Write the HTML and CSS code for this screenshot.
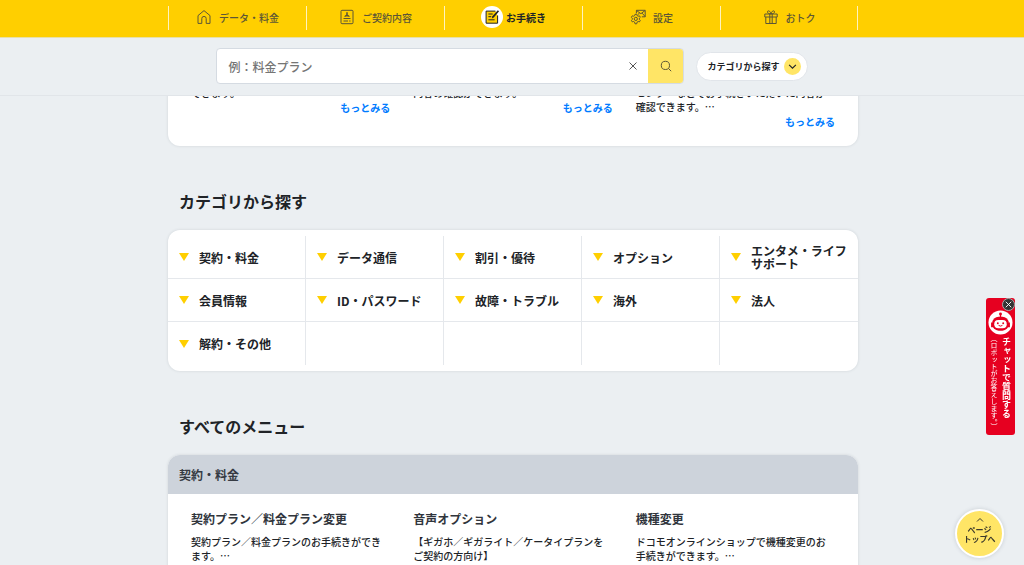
FILE: index.html
```html
<!DOCTYPE html>
<html lang="ja">
<head>
<meta charset="utf-8">
<meta name="viewport" content="width=device-width, initial-scale=1">
<title>お手続き</title>
<link rel="stylesheet" href="styles.css">
</head>
<body>
<header class="header">
  <nav class="nav" aria-label="メイン">
    <ul class="wrap nav-list">
      <li class="nav-item"><a class="nav-link" href="#data">
        <svg class="icon" viewBox="0 0 16 16"><path d="M2 6.6 8 1.6l6 5v7.8h-3.8V9.6a2.2 2.2 0 0 0-4.4 0v4.8H2z"/></svg>データ・料金</a></li>
      <li class="nav-item"><a class="nav-link" href="#contract">
        <svg class="icon" viewBox="0 0 16 16"><rect x="2" y="1.3" width="12" height="13.4" rx="1"/><path d="M6 8V6.8h4V8M4.5 9.5h7M4.5 12H9M10.2 12h1.3"/><path class="solid" d="M7.2 3.3h1.6v2.4L10 7.2H6l1.2-1.5z"/></svg>ご契約内容</a></li>
      <li class="nav-item"><a class="nav-link current" href="#procedure" aria-current="page">
        <span class="badge"><svg class="icon" viewBox="0 0 16 16"><path fill="#ffcf00" d="M13.6 6.5v7.7H2.1V2.1h9.3"/><path d="M4.4 5h4.3M4.4 7.7h2.8M4.4 10.8h6.2"/><path class="solid" d="m13.8 1.2 1.3 1.1-5.3 6.2-2 .9.6-2.1z"/></svg></span>お手続き</a></li>
      <li class="nav-item"><a class="nav-link" href="#settings">
        <svg class="icon" viewBox="0 0 16 16"><path d="M6.4 4.4V1.3h8.8v6.5h-3.4M6.5 1.5l4.4 3.2 4.2-3.2M12.2 4.2l2.9 3.3M9.5 4.3 7.7 5.5"/><path d="m5 5.3 1.7.1.4 1.2 1.1.6 1.2-.4.9 1.5-.9.9v1.3l.9.9-.9 1.5-1.2-.4-1.1.6-.4 1.7H5l-.4-1.7-1.1-.6-1.2.4-.9-1.5.9-.9V9.2l-.9-.9.9-1.5 1.2.4 1.1-.6z"/><circle cx="5.8" cy="9.9" r="1.6"/></svg>設定</a></li>
      <li class="nav-item"><a class="nav-link" href="#benefit">
        <svg class="icon" viewBox="0 0 16 16"><path d="M1.8 5h12.4v3H1.8zM2.8 8v6.5h10.4V8M6.8 5v9.5M9.2 5v9.5M8 4.7C5.8 4.8 4 4 4.5 2.5S7.7 2.3 8 4.7c.3-2.4 3-3.7 3.5-2.2S10.2 4.8 8 4.7z"/></svg>おトク</a></li>
    </ul>
  </nav>
  <div class="tools">
    <form class="search" role="search">
      <input class="search-input" type="text" aria-label="検索キーワード" placeholder="例：料金プラン">
      <button class="clear" type="reset" aria-label="クリア"><svg viewBox="0 0 10 10"><path d="m1.5 1.5 7 7m0-7-7 7"/></svg></button>
      <button class="submit" type="button" aria-label="検索"><svg viewBox="0 0 12 12"><circle cx="5.4" cy="5.4" r="4.1"/><path d="m8.4 8.4 2.8 2.8"/></svg></button>
    </form>
    <button class="pill" type="button">カテゴリから探す<span class="pill-mark"><svg viewBox="0 0 8 8"><path d="m1 2.5 3 3 3-3"/></svg></span></button>
  </div>
</header>

<main class="wrap">
  <section class="card recommend">
    <div class="entry"><p class="text">お手続きの内容をご確認いただくことが<br>できます。</p><a class="more" href="#more1">もっとみる</a></div>
    <div class="entry"><p class="text">ご契約いただいているサービスについて<br>内容の確認ができます。</p><a class="more" href="#more2">もっとみる</a></div>
    <div class="entry"><p class="text">ドコモショップ、インフォメーション<br>センターなどでお手続きいただいた内容が<br>確認できます。…</p><a class="more" href="#more3">もっとみる</a></div>
  </section>

  <h2 class="title">カテゴリから探す</h2>
  <ul class="card categories">
    <li class="cell"><a class="cat" href="#c1">契約・料金</a></li>
    <li class="cell"><a class="cat" href="#c2">データ通信</a></li>
    <li class="cell"><a class="cat" href="#c3">割引・優待</a></li>
    <li class="cell"><a class="cat" href="#c4">オプション</a></li>
    <li class="cell"><a class="cat" href="#c5">エンタメ・ライフ<br>サポート</a></li>
    <li class="cell"><a class="cat" href="#c6">会員情報</a></li>
    <li class="cell"><a class="cat" href="#c7">ID・パスワード</a></li>
    <li class="cell"><a class="cat" href="#c8">故障・トラブル</a></li>
    <li class="cell"><a class="cat" href="#c9">海外</a></li>
    <li class="cell"><a class="cat" href="#c10">法人</a></li>
    <li class="cell"><a class="cat" href="#c11">解約・その他</a></li>
    <li class="cell"></li>
    <li class="cell"></li>
    <li class="cell"></li>
    <li class="cell"></li>
  </ul>

  <h2 class="title">すべてのメニュー</h2>
  <section class="card menu">
    <h3 class="menu-head">契約・料金</h3>
    <div class="menu-body">
      <div class="entry"><h4 class="name">契約プラン／料金プラン変更</h4><p class="text">契約プラン／料金プランのお手続きができ<br>ます。…</p></div>
      <div class="entry"><h4 class="name">音声オプション</h4><p class="text">【ギガホ／ギガライト／ケータイプランを<br>ご契約の方向け】</p></div>
      <div class="entry"><h4 class="name">機種変更</h4><p class="text">ドコモオンラインショップで機種変更のお<br>手続きができます。…</p></div>
    </div>
  </section>
</main>

<aside class="chat">
  <button class="chat-close" type="button" aria-label="閉じる"><svg viewBox="0 0 12 12"><path d="m3 3 6 6m0-6-6 6"/></svg></button>
  <a class="chat-link" href="#chat">
    <svg class="robot" viewBox="0 0 26 26"><circle cx="13" cy="13" r="12.5" fill="#fff"/><path fill="#e60020" d="M12.3 4.5h1.4V8h-1.4zM3.2 13h2v5h-2zm17.6 0h2v5h-2z"/><circle cx="13" cy="4.2" r="1.5" fill="#e60020"/><rect x="4.5" y="7" width="17" height="14.5" rx="6.5" fill="#e60020"/><rect x="6.5" y="10.5" width="13" height="8.5" rx="4.2" fill="#fff"/><circle cx="10.2" cy="13.8" r="1" fill="#e60020"/><circle cx="15.8" cy="13.8" r="1" fill="#e60020"/><path fill="none" stroke="#e60020" d="M11 16q2 1.5 4 0"/></svg>
    <span class="chat-text"><b class="chat-main">チャットで質問する</b><span class="chat-sub">（ロボットがお答えします。）</span></span>
  </a>
</aside>
<a class="to-top" href="#top"><svg viewBox="0 0 8 6"><path d="m1 4.5 3-3 3 3"/></svg><span>ページ<br>トップへ</span></a>
</body>
</html>
```
FILE: styles.css
```css
* { box-sizing: border-box; }

body {
  margin: 0;
  height: 100vh;
  overflow: hidden;
  background: #ebeff2;
  color: #202327;
  font-family: "Noto Sans CJK JP", sans-serif;
  font-size: 10px;
}

ul, h2, h3, h4, p { margin: 0; padding: 0; list-style: none; }
a { color: inherit; text-decoration: none; }
button { border: 0; padding: 0; font: inherit; color: inherit; cursor: pointer; }
svg { display: block; fill: none; stroke: currentColor; }

.wrap { max-width: 692px; margin: 0 auto; padding-left: 2px; }

.header {
  position: sticky;
  top: 0;
  z-index: 2;
  background: #ebeff2;
  border-bottom: 1px solid #e1e5e9;
}

.nav { background: #ffcf00; padding: 6px 0 7px; border-bottom: 1px solid #e8e0a8; }
.nav-list { display: grid; grid-template-columns: repeat(5, 1fr); }
.nav-item { border-left: 1px solid #fff3bf; height: 24px; }
.nav-item:last-child { border-right: 1px solid #fff3bf; }
.nav-link {
  display: flex;
  align-items: center;
  justify-content: center;
  gap: 7px;
  height: 22px;
  color: #5c5636;
  font-weight: 500;
}
.icon { width: 16px; height: 16px; stroke-width: 1; }
.solid { fill: currentColor; stroke: none; }
.current { color: #202327; gap: 3px; font-weight: 700; }
.badge { padding: 3px; border-radius: 50%; background: #fff; }

.tools {
  display: flex;
  align-items: center;
  justify-content: center;
  gap: 12px;
  padding: 10px 0 11px;
}
.search {
  display: flex;
  flex: 0 1 468px;
  height: 36px;
  overflow: hidden;
  background: #fff;
  border: 1px solid #d5dbe2;
  border-radius: 4px;
}
.search-input {
  flex: 1;
  min-width: 0;
  border: 0;
  padding: 0 11px;
  background: none;
  font: 500 12px "Noto Sans CJK JP", sans-serif;
}
.search-input::placeholder { color: #757575; }
.clear { width: 30px; background: none; color: #555; }
.clear svg { width: 10px; margin: auto; }
.submit { width: 35px; background: #ffe566; color: #5c5636; }
.submit svg { width: 12px; margin: auto; }
.pill {
  display: flex;
  align-items: center;
  gap: 4px;
  height: 29px;
  padding: 0 6px 0 10px;
  background: #fff;
  border: 1px solid #e1e5ea;
  border-radius: 15px;
  font-size: 9px;
  font-weight: 700;
  white-space: nowrap;
}
.pill-mark { padding: 4px; border-radius: 50%; background: #ffe566; }
.pill-mark svg { width: 9px; height: 9px; }

.card {
  background: #fff;
  border-radius: 12px;
  box-shadow: 0 0 3px rgba(60, 75, 90, .16);
}

.recommend, .menu-body {
  display: grid;
  grid-template-columns: repeat(3, 1fr);
  gap: 23px;
  padding: 0 23px;
}
.recommend { margin-top: -38px; padding-top: 14px; padding-bottom: 17px; }
.text { font-size: 10px; line-height: 14px; font-weight: 500; white-space: nowrap; }
.more { display: block; text-align: right; line-height: 15px; color: #007bff; font-weight: 700; }

.title { padding-left: 11px; font-size: 16px; line-height: 24px; margin: 43px 0 17px; }

.categories {
  display: grid;
  grid-template-columns: repeat(5, 1fr);
  padding: 6px 0;
}
.cell {
  display: flex;
  height: 43px;
  border-right: 1px solid #e5e8ec;
  border-bottom: 1px solid #e5e8ec;
}
.cell:nth-child(5n) { border-right: 0; }
.cell:nth-child(n+11) { border-bottom: 0; }
.cat {
  display: flex;
  align-items: center;
  gap: 10px;
  padding-left: 11px;
  font-size: 12px;
  line-height: 13px;
  font-weight: 700;
  white-space: nowrap;
}
.cat::before {
  content: "";
  border: 5px solid transparent;
  border-top: 8px solid #ffcf00;
  border-bottom: 0;
}

.menu-head {
  padding: 0 11px;
  background: #cdd3db;
  border-radius: 12px 12px 0 0;
  color: #363b43;
  font-size: 12px;
  line-height: 39px;
}
.menu-body { padding-top: 16px; padding-bottom: 23px; }
.name { margin-bottom: 8px; color: #30353c; font-size: 12px; line-height: 17px; white-space: nowrap; }

.chat {
  position: fixed;
  right: 9px;
  top: 298px;
  z-index: 3;
  width: 29px;
  background: #e60020;
  border-radius: 3px;
  color: #fff;
}
.chat-close {
  position: absolute;
  top: 0;
  right: 0;
  width: 13px;
  height: 13px;
  border: 1px solid #aaa;
  border-radius: 50%;
  background: #333;
}
.chat-link { display: block; padding: 12px 2px 5px; }
.robot { width: 25px; height: 25px; stroke: none; }
.chat-text { display: block; writing-mode: vertical-rl; white-space: nowrap; }
.chat-main { display: block; padding-top: 2px; font-size: 9px; line-height: 13px; }
.chat-sub { display: block; font-size: 7px; line-height: 12px; }

.to-top {
  position: fixed;
  right: 20px;
  bottom: 7px;
  z-index: 3;
  display: flex;
  flex-direction: column;
  align-items: center;
  gap: 2px;
  width: 49px;
  height: 49px;
  padding-top: 6px;
  border: 2px solid #fff;
  border-radius: 50%;
  background: #ffe566;
  box-shadow: 0 0 4px rgba(60, 75, 90, .2);
  color: #3c3a2c;
  font-size: 8px;
  line-height: 9px;
  font-weight: 700;
  text-align: center;
  white-space: nowrap;
}
.to-top svg { width: 8px; height: 6px; }
```
